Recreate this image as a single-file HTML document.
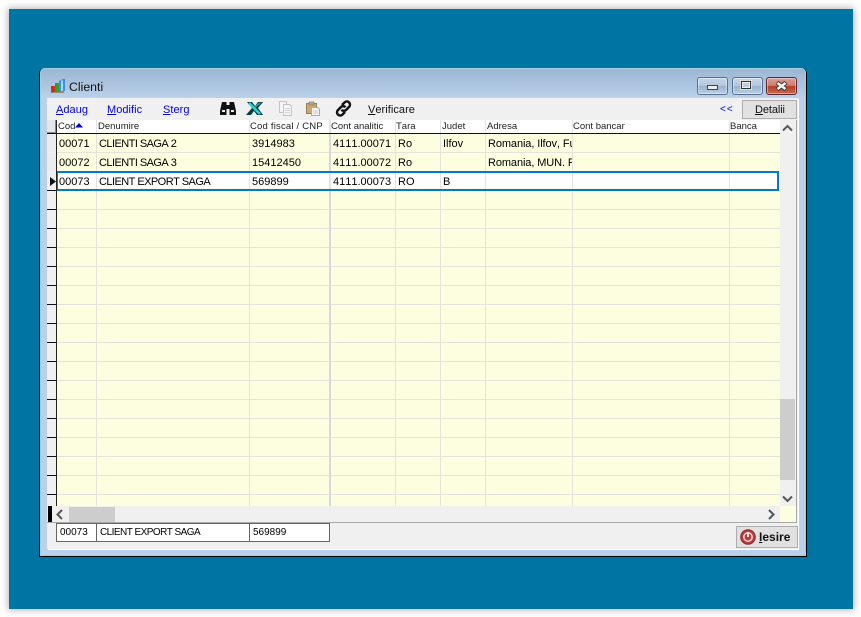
<!DOCTYPE html>
<html><head><meta charset="utf-8"><style>
html,body{margin:0;padding:0;width:861px;height:617px;overflow:hidden;background:#fff}
body{position:relative;font-family:"Liberation Sans",sans-serif;color:#000;font-kerning:none}
div,span.a,svg{position:absolute}
.t{white-space:nowrap;font-size:11px;line-height:13px}
.n{letter-spacing:-.55px}
.h{white-space:nowrap;font-size:9.5px;line-height:12px;top:121px;color:#222}
.l{white-space:nowrap;font-size:11px;line-height:14px;top:103px;color:#0000e0;letter-spacing:.05px}
.v{width:1px;top:134px;height:372px;background:#e4e4dc}
.hv{width:1px;top:120px;height:13px;background:#e4e4e4}
.tick{left:47px;width:9px;height:1px;background:#111}
.btn{top:77px;height:16px;width:29px;border:1px solid #5a7090;border-radius:3px;background:linear-gradient(#c5d6e8 0,#b2c8de 48%,#98b2cc 52%,#bcd0e4 100%);box-shadow:inset 0 0 0 1px rgba(255,255,255,.4)}
u{text-decoration:underline}
</style></head><body>
<div style="left:9px;top:9px;width:844px;height:600px;background:#0074a3;box-shadow:0 0 7px 1px rgba(0,0,0,.3)"></div>
<div style="left:39px;top:68px;width:768px;height:489px;background:#000;border-radius:6px 6px 0 0"></div>
<div style="left:40px;top:68px;width:766px;height:488px;background:#b9d1ea;border-radius:5px 5px 0 0;box-shadow:inset 0 0 0 1px #9fd0e0"></div>
<div style="left:41px;top:69px;width:764px;height:29px;border-radius:4px 4px 0 0;background:linear-gradient(#9cb6d3,#b9d1ea)"></div>
<!-- title icon -->
<svg style="left:50px;top:78px" width="16" height="16" viewBox="0 0 16 16">
<rect x="1" y="8" width="4" height="6" fill="#d62a20"/><rect x="5" y="5" width="4" height="9" fill="#2ea02e"/><path d="M9 3l4-2h2v12l-2 1H9z" fill="#3d8fe0"/><path d="M11 2.500h2V13h-2z" fill="#a8d4f5"/><rect x="1" y="14" width="13" height="1" fill="#9a8a6a"/>
</svg>
<div class="t" style="left:69px;top:79px;font-size:12.3px;line-height:16px;color:#111">Clienti</div>
<!-- window buttons -->
<div class="btn" style="left:697px"></div>
<div style="left:707px;top:85px;width:9px;height:3px;background:#eee;border:1px solid #444"></div>
<div class="btn" style="left:732px"></div>
<div style="left:741px;top:81px;width:8px;height:6px;border:1px solid #333;outline:1px solid #ddd;background:#b9cce0;box-shadow:inset 0 0 0 1px #eee"></div>
<div class="btn" style="left:766px;border-color:#5c2630;background:linear-gradient(#d9a098 0,#cf7a6c 48%,#b83c24 52%,#c96a50 100%)"></div>
<svg style="left:775px;top:81px" width="13" height="10" viewBox="0 0 13 10"><path d="M2 1.500l9 7M11 1.500l-9 7" stroke="#3a3a3a" stroke-width="4.500"/><path d="M2.500 2l8 6M10.500 2l-8 6" stroke="#f2f2f2" stroke-width="2.600"/></svg>
<!-- client -->
<div style="left:47px;top:98px;width:751px;height:451px;background:#f0f0f0;box-shadow:1px 1px 0 #fff"></div>
<!-- toolbar -->
<div class="l" style="left:56px"><u>A</u>daug</div>
<div class="l" style="left:107px"><u>M</u>odific</div>
<div class="l" style="left:163px"><u>S</u>terg</div>
<svg style="left:220px;top:101px" width="16" height="14" viewBox="0 0 16 14"><path d="M2 1h4.500v3h3V1H14l2 9v4H9.500V8h-3v6H0v-4z" fill="#111"/><rect x="2" y="9" width="3" height="2" fill="#eee"/><rect x="11" y="9" width="3" height="2" fill="#eee"/></svg>
<svg style="left:246px;top:101px" width="18" height="15" viewBox="0 0 18 15"><path d="M1 1h5l3 4 3-4h5l-5 6 5 7h-6l-3-4-3 4H0l6-7z" fill="#0b3c40"/><path d="M3 2l11 11" stroke="#24d3d8" stroke-width="2.600"/><path d="M14 2L9 6" stroke="#28a7ad" stroke-width="1.500"/></svg>
<svg style="left:278px;top:101px" width="16" height="15" viewBox="0 0 16 15" fill="#f5f5f5" stroke="#c4c4c4"><path d="M1.500.5h7v11h-7z"/><path d="M5.500 3.500h6l2 2v9h-8z"/><path d="M7 7.500h5M7 9.500h5M7 11.500h5" stroke="#d4d4d4"/></svg>
<svg style="left:305px;top:101px" width="16" height="15" viewBox="0 0 16 15"><path d="M1.500 2.500h10v10h-10z" fill="#d2a868" stroke="#9a8058"/><rect x="4" y="1" width="5" height="3" fill="#b0a890" stroke="#8b8065" stroke-width=".7"/><path d="M6.500 6.500h6l2 2v6h-8z" fill="#f5f5f5" stroke="#aaa"/><path d="M8 10h5M8 12h5" stroke="#ccc"/></svg>
<svg style="left:335px;top:100px" width="17" height="17" viewBox="0 0 17 17" fill="none" stroke="#111" stroke-width="2.500"><path d="M7 5l2.500-2.500a3 3 0 0 1 4.600 4.400L11 10a3 3 0 0 1-4.500-.3"/><path d="M10 12l-2.500 2.500a3 3 0 0 1-4.600-4.400L6 7a3 3 0 0 1 4.500.3"/></svg>
<div class="l" style="left:368px;color:#111;letter-spacing:.05px"><u>V</u>erificare</div>
<div class="l" style="left:720px;top:103px;color:#0000e0;font-size:10px;letter-spacing:1px">&lt;&lt;</div>
<div style="left:742px;top:100px;width:53px;height:17px;background:#e1e1e1;border:1px solid #adadad"></div>
<div class="l" style="left:755px;color:#111;letter-spacing:-.1px"><u>D</u>etalii</div>
<!-- grid -->
<div style="left:47px;top:120px;width:750px;height:403px;background:#a8a8a8"></div>
<div style="left:47px;top:120px;width:749px;height:402px;background:#f0f0f0"></div>
<div style="left:57px;top:120px;width:723px;height:13px;background:#fff"></div>
<div style="left:57px;top:134px;width:723px;height:372px;background:repeating-linear-gradient(#fdfde0 0,#fdfde0 18px,#e4e4dc 18px,#e4e4dc 19px)"></div>
<div style="left:47px;top:133px;width:733px;height:1px;background:#111"></div>
<div style="left:56px;top:120px;width:1px;height:386px;background:#222"></div>
<div style="left:47px;top:120px;width:9px;height:13px;background:#e6e6e6;box-shadow:inset -1px -1px 0 #888"></div>
<div style="left:47px;top:134px;width:9px;height:18px;background:#ececec"></div>
<div style="left:47px;top:153px;width:9px;height:18px;background:#ececec"></div>
<div class="tick" style="top:190px"></div><div class="tick" style="top:209px"></div><div class="tick" style="top:228px"></div><div class="tick" style="top:247px"></div><div class="tick" style="top:266px"></div><div class="tick" style="top:285px"></div><div class="tick" style="top:304px"></div><div class="tick" style="top:323px"></div><div class="tick" style="top:342px"></div><div class="tick" style="top:361px"></div><div class="tick" style="top:380px"></div><div class="tick" style="top:399px"></div><div class="tick" style="top:418px"></div><div class="tick" style="top:437px"></div><div class="tick" style="top:456px"></div><div class="tick" style="top:475px"></div><div class="tick" style="top:494px"></div>
<!-- verticals -->
<div class="v" style="left:96px"></div><div class="v" style="left:249px"></div><div class="v" style="left:329px;width:2px;background:#d8d8d4"></div><div class="v" style="left:395px"></div><div class="v" style="left:440px"></div><div class="v" style="left:485px"></div><div class="v" style="left:572px"></div><div class="v" style="left:729px"></div>
<div class="hv" style="left:96px"></div><div class="hv" style="left:249px"></div><div class="hv" style="left:329px;width:2px"></div><div class="hv" style="left:395px"></div><div class="hv" style="left:440px"></div><div class="hv" style="left:485px"></div><div class="hv" style="left:572px"></div><div class="hv" style="left:729px"></div>
<!-- selected row -->
<div style="left:57px;top:172px;width:720px;height:16px;background:#fff"></div>
<div class="v" style="left:96px;top:172px;height:16px"></div><div class="v" style="left:249px;top:172px;height:16px"></div><div class="v" style="left:329px;top:172px;height:16px;width:2px"></div><div class="v" style="left:395px;top:172px;height:16px"></div><div class="v" style="left:440px;top:172px;height:16px"></div><div class="v" style="left:485px;top:172px;height:16px"></div><div class="v" style="left:572px;top:172px;height:16px"></div><div class="v" style="left:729px;top:172px;height:16px"></div>
<div style="left:57px;top:171px;width:719px;height:16px;border:2px solid #0078d7;border-width:2px 2px 2px 1px"></div>
<svg style="left:50px;top:177px" width="6" height="9" viewBox="0 0 6 9"><path d="M0 0l6 4.500-6 4.500z" fill="#111"/></svg>
<!-- headers -->
<div class="h" style="left:58px">Cod</div>
<svg style="left:75px;top:123px" width="8" height="5" viewBox="0 0 8 5"><path d="M0 4.500L4 0l4 4.500z" fill="#0000c8"/></svg>
<div class="h" style="left:98px">Denumire</div>
<div class="h" style="left:250px;letter-spacing:.2px">Cod fiscal / CNP</div>
<div class="h" style="left:331px">Cont analitic</div>
<div class="h" style="left:396px">Tara</div>
<div class="h" style="left:442px">Judet</div>
<div class="h" style="left:487px">Adresa</div>
<div class="h" style="left:573px">Cont bancar</div>
<div class="h" style="left:730px">Banca</div>
<!-- row 1 -->
<div class="t" style="left:59px;top:138px">00071</div><div class="t n" style="left:99px;top:138px">CLIENTI SAGA 2</div><div class="t" style="left:252px;top:138px">3914983</div><div class="t" style="left:333px;top:138px">4111.00071</div><div class="t" style="left:398px;top:138px">Ro</div><div class="t" style="left:443px;top:138px">Ilfov</div><div class="t" style="left:488px;top:138px;width:84px;overflow:hidden;letter-spacing:-.1px">Romania, Ilfov, Fu</div>
<!-- row 2 -->
<div class="t" style="left:59px;top:157px">00072</div><div class="t n" style="left:99px;top:157px">CLIENTI SAGA 3</div><div class="t" style="left:252px;top:157px">15412450</div><div class="t" style="left:333px;top:157px">4111.00072</div><div class="t" style="left:398px;top:157px">Ro</div><div class="t" style="left:488px;top:157px;width:84px;overflow:hidden;letter-spacing:-.1px">Romania, MUN. Pl</div>
<!-- row 3 -->
<div class="t" style="left:59px;top:176px">00073</div><div class="t n" style="left:99px;top:176px">CLIENT EXPORT SAGA</div><div class="t" style="left:252px;top:176px">569899</div><div class="t" style="left:333px;top:176px">4111.00073</div><div class="t" style="left:398px;top:176px">RO</div><div class="t" style="left:443px;top:176px">B</div>
<!-- vertical scrollbar -->
<div style="left:780px;top:120px;width:15px;height:386px;background:#f0f0f0"></div>
<div style="left:780px;top:399px;width:15px;height:81px;background:#cdcdcd"></div>
<svg style="left:782px;top:124px" width="11" height="8" viewBox="0 0 11 8"><path d="M1 6.500l4.500-4.500L10 6.500" fill="none" stroke="#555" stroke-width="2"/></svg>
<svg style="left:782px;top:495px" width="11" height="8" viewBox="0 0 11 8"><path d="M1 1.500l4.500 4.500L10 1.500" fill="none" stroke="#555" stroke-width="2"/></svg>
<!-- horizontal scrollbar -->
<div style="left:48px;top:506px;width:4px;height:16px;background:#000"></div>
<div style="left:52px;top:506px;width:728px;height:16px;background:#f0f0f0"></div>
<div style="left:69px;top:507px;width:46px;height:15px;background:#cdcdcd"></div>
<div style="left:780px;top:506px;width:16px;height:16px;background:#fdfde0"></div>
<svg style="left:55px;top:509px" width="9" height="11" viewBox="0 0 9 11"><path d="M7 1L2.500 5.500 7 10" fill="none" stroke="#555" stroke-width="2"/></svg>
<svg style="left:767px;top:509px" width="9" height="11" viewBox="0 0 9 11"><path d="M2 1l4.500 4.500L2 10" fill="none" stroke="#555" stroke-width="2"/></svg>
<!-- footer -->
<div style="left:56px;top:523px;width:272px;height:17px;background:#fff;border:1px solid #666"></div>
<div style="left:96px;top:523px;width:1px;height:18px;background:#666"></div>
<div style="left:249px;top:523px;width:1px;height:18px;background:#666"></div>
<div class="t" style="left:60px;top:526px;font-size:10px">00073</div>
<div class="t" style="left:100px;top:526px;font-size:10px;letter-spacing:-.55px">CLIENT EXPORT SAGA</div>
<div class="t" style="left:253px;top:526px;font-size:10px">569899</div>
<div style="left:736px;top:526px;width:60px;height:20px;background:#e1e1e1;border:1px solid #adadad"></div>
<svg style="left:740px;top:529px" width="16" height="16" viewBox="0 0 16 16"><circle cx="8" cy="8" r="7.300" fill="#b83a3a" stroke="#8a2a2a"/><circle cx="8" cy="8" r="4.200" fill="none" stroke="#f4d8d8" stroke-width="1.500"/><path d="M8 3v5" stroke="#f8e8e8" stroke-width="2"/></svg>
<div class="t" style="left:759px;top:530px;font-size:12px;line-height:14px;font-weight:bold;color:#111"><u>I</u>esire</div>
</body></html>
